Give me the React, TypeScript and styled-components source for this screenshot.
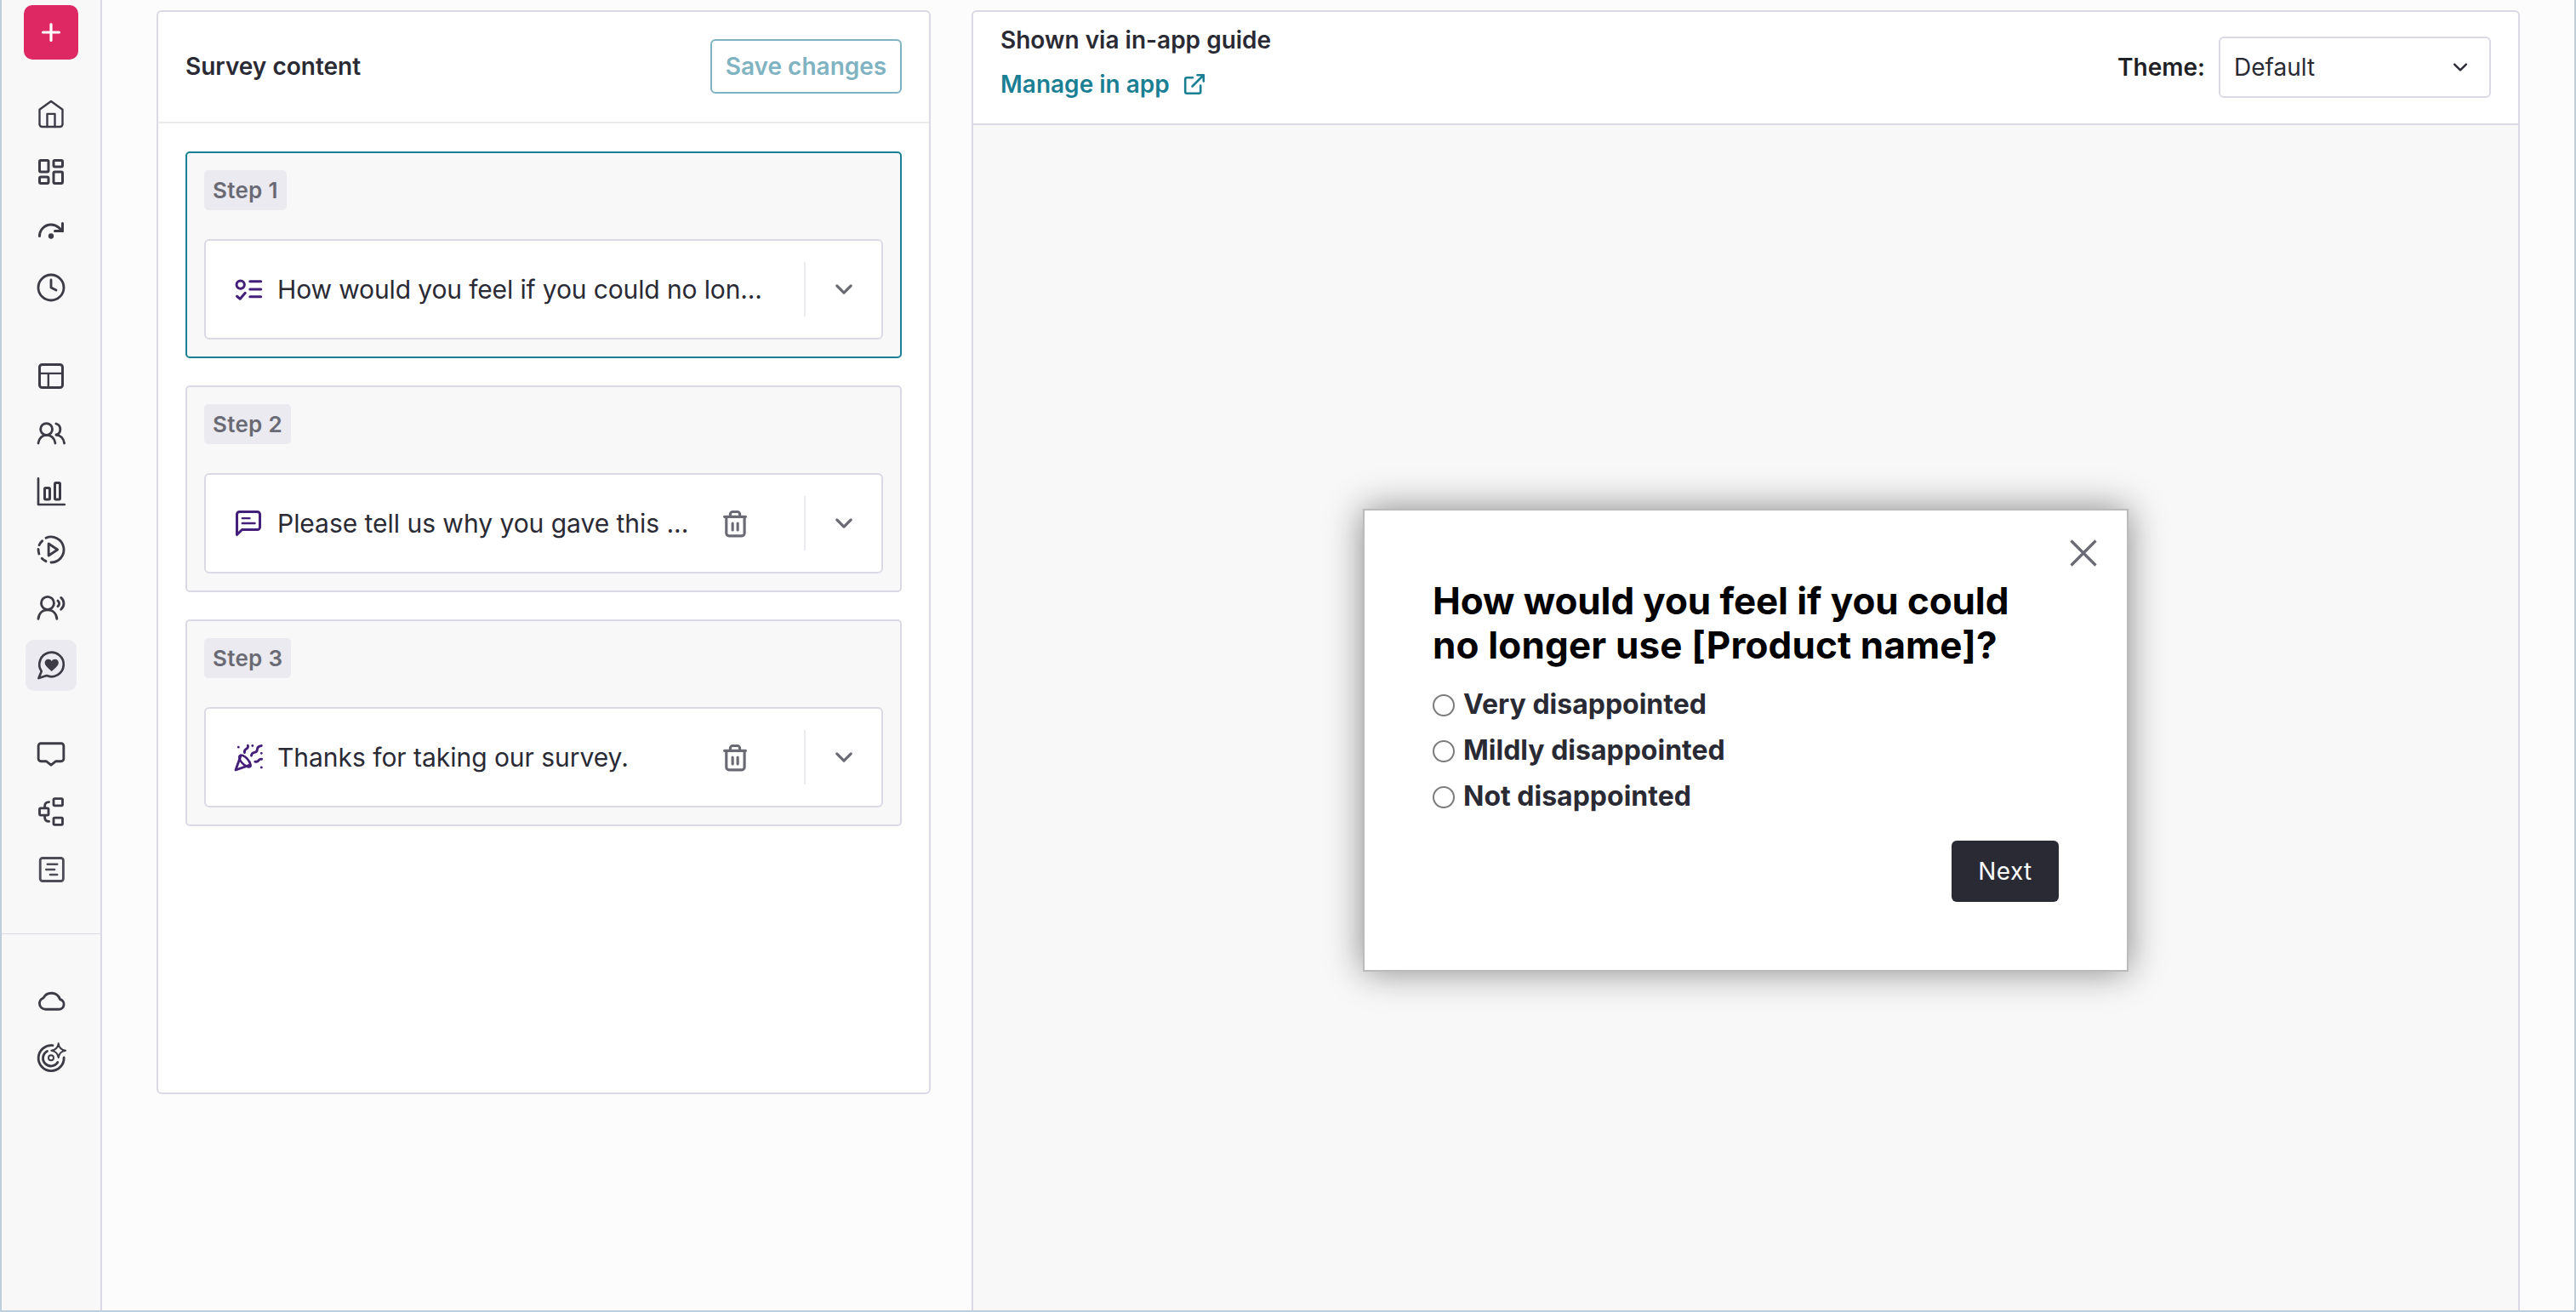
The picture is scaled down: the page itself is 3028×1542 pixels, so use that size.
import React from "react";
import styled, { createGlobalStyle, css } from "styled-components";

const color = {
  ink: "#2a2a35",
  icon: "#3c3b46",
  muted: "#6a6a75",
  line: "#dadae6",
  lineSoft: "#eaeaef",
  surface: "#f8f8f8",
  chip: "#eaeaf0",
  teal: "#1a7f93",
  tealMuted: "#7fb3c1",
  purple: "#441f79",
  pink: "#de2864",
};

const GlobalStyle = createGlobalStyle`
  * { box-sizing: border-box; }
  html, body { margin: 0; padding: 0; }
  body { font-family: Inter, "Liberation Sans", sans-serif; color: ${color.ink}; background: #fcfcfc; }
  button { font-family: inherit; }
`;

const Frame = styled.div`
  display: flex;
  width: 3028px;
  height: 1542px;
  overflow: hidden;
  background: #fcfcfc;
  border: 2px solid #bfcedb;
  border-top: 0;
`;

const Sidebar = styled.nav`
  flex: none;
  display: flex;
  flex-direction: column;
  align-items: center;
  width: 118px;
  padding-top: 6px;
  background: ${color.surface};
  border-right: 2px solid ${color.line};
`;

const AddButton = styled.button`
  display: flex;
  align-items: center;
  justify-content: center;
  width: 64px;
  height: 64px;
  padding: 0;
  margin-bottom: 34px;
  border: 0;
  border-radius: 10px;
  background: ${color.pink};
  color: #fff;
`;

const NavGroup = styled.div`
  display: flex;
  flex-direction: column;
  gap: 8px;
  margin-bottom: 44px;
`;

const NavItem = styled.a<{ $active?: boolean }>`
  display: flex;
  align-items: center;
  justify-content: center;
  width: 60px;
  height: 60px;
  border-radius: 10px;
  color: ${color.icon};
  background: ${(p) => (p.$active ? color.chip : "transparent")};
`;

const NavDivider = styled.hr`
  width: 100%;
  height: 1px;
  margin: 1px 0 48px;
  border: 0;
  background: ${color.line};
`;

const Svg = styled.svg<{ $size?: number; $stroke?: number }>`
  flex: none;
  display: block;
  width: ${(p) => p.$size ?? 36}px;
  height: ${(p) => p.$size ?? 36}px;
  fill: none;
  stroke: currentColor;
  stroke-width: ${(p) => p.$stroke ?? 2};
  stroke-linecap: round;
  stroke-linejoin: round;
  overflow: visible;
`;

const Workspace = styled.main`
  flex: 1;
  display: flex;
  align-items: flex-start;
  gap: 48px;
  padding: 12px 64px 0 64px;
`;

const panel = css`
  border: 2px solid ${color.line};
  background: #fff;
`;

const SurveyPanel = styled.section`
  ${panel}
  flex: none;
  width: 910px;
  height: 1274px;
  border-radius: 6px;
`;

const SurveyHeader = styled.header`
  display: flex;
  align-items: center;
  justify-content: space-between;
  height: 131px;
  padding: 0 32px 1px;
  border-bottom: 2px solid ${color.lineSoft};
`;

const Heading = styled.h2`
  margin: 0;
  font-size: 28px;
  line-height: 40px;
  font-weight: 600;
`;

const SaveButton = styled.button`
  width: 225px;
  height: 64px;
  padding: 0;
  border: 2px solid ${color.tealMuted};
  border-radius: 6px;
  background: #fff;
  color: ${color.tealMuted};
  font-size: 28px;
  font-weight: 600;
  white-space: nowrap;
`;

const StepList = styled.div`
  display: flex;
  flex-direction: column;
  gap: 32px;
  padding: 33px 32px 0;
`;

const StepCard = styled.article<{ $selected?: boolean }>`
  display: flex;
  flex-direction: column;
  align-items: flex-start;
  justify-content: space-between;
  height: 243px;
  padding: 20px;
  border: 2px solid ${(p) => (p.$selected ? color.teal : color.line)};
  border-radius: 5px;
  background: ${color.surface};
`;

const StepBadge = styled.span`
  height: 47px;
  padding: 0 10px;
  border-radius: 5px;
  background: ${color.chip};
  color: ${color.muted};
  font-size: 26px;
  line-height: 47px;
  font-weight: 600;
  letter-spacing: 0.3px;
`;

const QuestionRow = styled.div`
  display: flex;
  align-items: center;
  width: 100%;
  height: 118px;
  padding-left: 32px;
  border: 2px solid ${color.line};
  border-radius: 6px;
  background: #fff;
`;

const QuestionIcon = styled.span`
  display: flex;
  color: ${color.purple};
`;

const QuestionText = styled.span<{ $tracking: number }>`
  flex: 1;
  min-width: 0;
  padding-left: 16px;
  font-size: 30px;
  line-height: 40px;
  letter-spacing: ${(p) => p.$tracking}px;
  white-space: nowrap;
`;

const RowAction = styled.button`
  display: flex;
  justify-content: center;
  width: 36px;
  margin-right: 63px;
  padding: 0;
  border: 0;
  background: none;
  color: ${color.muted};
`;

const ExpandButton = styled.button`
  display: flex;
  align-items: center;
  justify-content: center;
  width: 91px;
  height: 64px;
  padding: 0 0 0 1px;
  border: 0;
  border-left: 2px solid ${color.lineSoft};
  background: none;
  color: ${color.muted};
`;

const GuidePanel = styled.section`
  ${panel}
  flex: 1;
  display: flex;
  flex-direction: column;
  height: 1528px;
  border-bottom: 0;
  border-radius: 6px 6px 0 0;
`;

const GuideHeader = styled.header`
  flex: none;
  display: flex;
  align-items: center;
  justify-content: space-between;
  height: 133px;
  padding: 0 32px 1px;
  border-bottom: 2px solid ${color.line};
`;

const GuideInfo = styled.div`
  display: flex;
  flex-direction: column;
  gap: 12px;
  padding-bottom: 12px;
`;

const ManageLink = styled.a`
  display: flex;
  align-items: center;
  gap: 17px;
  color: ${color.teal};
  font-size: 28px;
  line-height: 40px;
  font-weight: 600;
`;

const ThemeField = styled.label`
  display: flex;
  align-items: center;
  gap: 16px;
  color: #1f1f26;
  font-size: 28px;
  font-weight: 600;
`;

const ThemeSelect = styled.div`
  display: flex;
  align-items: center;
  justify-content: space-between;
  width: 320px;
  height: 72px;
  padding: 0 19px 0 16px;
  border: 2px solid ${color.line};
  border-radius: 6px;
  background: #fff;
  color: ${color.ink};
  font-weight: 400;
`;

const Preview = styled.div`
  flex: 1;
  display: flex;
  align-items: center;
  justify-content: center;
  background: ${color.surface};
`;

const Dialog = styled.div`
  position: relative;
  display: flex;
  flex-direction: column;
  width: 900px;
  height: 544px;
  margin-top: 53px;
  padding: 80px;
  border: 2px solid #bbb;
  background: #fff;
  box-shadow: 0 0 40px #888;
`;

const CloseButton = styled.button`
  position: absolute;
  top: 32px;
  right: 33px;
  display: flex;
  padding: 0;
  border: 0;
  background: none;
  color: ${color.muted};
`;

const Question = styled.h3`
  margin: 0;
  color: #000;
  font-size: 44px;
  line-height: 52px;
  font-weight: 700;
  white-space: nowrap;
`;

const QuestionLine = styled.span<{ $tracking: number }>`
  display: block;
  letter-spacing: ${(p) => p.$tracking}px;
`;

const Options = styled.div`
  display: flex;
  flex-direction: column;
  padding-top: 18px;
`;

const Option = styled.label`
  display: flex;
  align-items: center;
  gap: 10px;
  height: 54px;
  padding-bottom: 4px;
  font-size: 32px;
  font-weight: 700;
`;

const Radio = styled.span`
  width: 26px;
  height: 26px;
  margin-top: 4px;
  border: 2px solid #7c7c7c;
  border-radius: 50%;
  background: #fff;
`;

const NextButton = styled.button`
  align-self: flex-end;
  width: 126px;
  height: 72px;
  margin-top: 24px;
  padding: 0;
  border: 0;
  border-radius: 6px;
  background: ${color.ink};
  color: #fff;
  font-size: 28px;
  letter-spacing: 0.4px;
`;

type IconProps = { size?: number; stroke?: number; children: React.ReactNode };
const Icon = ({ size, stroke, children }: IconProps) => (
  <Svg viewBox="0 0 24 24" $size={size} $stroke={stroke} aria-hidden>
    {children}
  </Svg>
);

const HomeIcon = () => (
  <Icon stroke={1.6}>
    <path d="M3 8.5 12 2l9 6.5V20a2 2 0 0 1-2 2H5a2 2 0 0 1-2-2z" />
    <path d="M9 22V11.9h6V22" />
  </Icon>
);
const DashboardIcon = () => (
  <Icon>
    <rect x="3" y="3" width="7" height="9" rx="1" />
    <rect x="14" y="3" width="7" height="5" rx="1" />
    <rect x="14" y="12" width="7" height="9" rx="1" />
    <rect x="3" y="16" width="7" height="5" rx="1" />
  </Icon>
);
const RedoIcon = () => (
  <Icon>
    <circle cx="12" cy="17" r="1.1" fill="currentColor" />
    <path d="M21 7v6h-6" />
    <path d="M3 17a9 9 0 0 1 9-9 9 9 0 0 1 6 2.3l3 2.7" />
  </Icon>
);
const ClockIcon = () => (
  <Icon stroke={1.9}>
    <circle cx="12" cy="12" r="10" />
    <path d="M12 6v6l4 2" />
  </Icon>
);
const LayoutIcon = () => (
  <Icon>
    <rect x="3" y="3" width="18" height="18" rx="2" />
    <path d="M3 9.9h18M9.9 21V9.9" strokeWidth="1.6" />
  </Icon>
);
const UsersIcon = () => (
  <Icon stroke={1.9}>
    <circle cx="8.4" cy="8.3" r="4.6" />
    <path d="M2 19.3c.4-3.7 3.1-6.4 6.6-6.4s6.3 2.7 6.7 6.4" />
    <path d="M16 4a4.6 4.6 0 0 1 .2 8.7" />
    <path d="M16 12.7c3.3.3 5.9 2.9 6.4 6.6" />
  </Icon>
);
const ChartIcon = () => (
  <Icon stroke={1.8}>
    <path d="M2 1.6V22h20.5" />
    <rect x="7" y="9" width="4" height="9" rx=".8" strokeWidth="2" />
    <rect x="15" y="5" width="4" height="13" rx=".8" strokeWidth="2" />
  </Icon>
);
const ReplayIcon = () => (
  <Icon stroke={1.9}>
    <path d="M8 2.85A10 10 0 1 1 12 22" />
    <path d="M5.200 5.100A10 10 0 0 0 2.700 8.400M2.050 11.600A10 10 0 0 0 2.600 15.300M4.800 18.900A10 10 0 0 0 8 21.100" />
    <path d="M10.100 7.300v9.400l7-4.700z" />
  </Icon>
);
const VoiceIcon = () => (
  <Icon stroke={1.9}>
    <circle cx="9.3" cy="8.6" r="5" />
    <path d="M2 20.900c.4-4.200 3.200-7 7.300-7s6.900 2.800 7.300 7" />
    <path d="M17.300 6.700c1.500 1.200 1.500 3.200 0 4.400M19.800 4.300c2.900 2.400 2.900 6.800 0 9.200" />
  </Icon>
);
const FeedbackIcon = () => (
  <Icon stroke={1.8}>
    <path d="M2.300 22 4.500 16.600A9.500 9.500 0 1 1 8.600 20z" />
    <path
      d="M12.500 16.600c-2.400-2-5.400-4.200-5.400-6.700 0-1.600 1.200-2.800 2.700-2.800 1.100 0 2.100.6 2.700 1.500.6-.9 1.600-1.500 2.700-1.500 1.500 0 2.700 1.200 2.700 2.800 0 2.500-3 4.700-5.400 6.700z"
      fill="currentColor"
      stroke="none"
    />
  </Icon>
);
const SpeechIcon = () => (
  <Icon stroke={1.9}>
    <path d="M4 3.800h16a1.900 1.900 0 0 1 1.900 1.900v10.200a1.900 1.900 0 0 1-1.900 1.900h-4.200L12 20.800l-3.800-3H4a1.900 1.900 0 0 1-1.900-1.900V5.700A1.900 1.900 0 0 1 4 3.800z" />
  </Icon>
);
const FlowIcon = () => (
  <Icon stroke={1.9}>
    <rect x="14" y="1.7" width="7" height="5.5" rx=".8" />
    <rect x="3" y="9.2" width="7" height="5.5" rx=".8" />
    <rect x="14" y="16.7" width="7" height="5.5" rx=".8" />
    <path d="M7.100 8.600V7.500c0-2 1.200-3.100 3.300-3.100M7.100 15.400v1.100c0 2 1.200 3.100 3.300 3.100" />
  </Icon>
);
const FormIcon = () => (
  <Icon stroke={1.9}>
    <g opacity=".9">
      <rect x="3.5" y="3" width="18.1" height="18" rx="1.8" />
      <path d="M9.200 7.800h7.600M8.200 12h6.500M11.300 16h5.500" strokeWidth="1.7" />
    </g>
  </Icon>
);
const CloudIcon = () => (
  <Icon stroke={1.9}>
    <path d="M7.200 18.800h11a3.950 3.950 0 0 0 .8-7.800A7.100 7.100 0 0 0 6 9.900a4.600 4.600 0 0 0 1.200 8.900z" />
  </Icon>
);
const TargetIcon = () => (
  <Icon stroke={1.9}>
    <path d="M13.300 1.800A10 10 0 1 0 22.100 11.300" />
    <path d="M9 6.300A6.200 6.200 0 1 0 17.200 15" />
    <circle cx="12" cy="11.5" r="2" strokeWidth="1.3" />
    <path
      d="M17.800.2c.4 3.400 2 5.100 5.600 5.600-3.600.5-5.200 2.200-5.600 5.600-.4-3.400-2-5.100-5.600-5.600 3.600-.5 5.200-2.200 5.600-5.600z"
      strokeWidth="1.3"
    />
  </Icon>
);

const PollIcon = () => (
  <Icon>
    <circle cx="5.8" cy="8.4" r="3.1" />
    <path d="M3 17.500l2.500 2 4-4.600M13.200 5.900h8.600M13.200 12h8.600M13.200 17.900h8.600" />
  </Icon>
);
const MessageIcon = () => (
  <Icon>
    <path d="M3 21V5a2 2 0 0 1 2-2h14a2 2 0 0 1 2 2v10a2 2 0 0 1-2 2H7z" />
    <path d="M7.200 8.100h5.800M7.200 12h9.800" strokeWidth="1.6" />
  </Icon>
);
const PartyIcon = () => (
  <Icon stroke={1.9}>
    <path d="M5.800 11.300 2 22l10.700-3.790" />
    <path
      d="M12.600 15.600c1.200 1.700 1.500 3 .9 3.600-1.100 1-4.100-.2-6.300-2.600-2.300-2.400-2.900-5-1.800-5.900 1-1 3.700.4 5.500 2.300l2.300 3"
      strokeWidth="1.7"
    />
    <path d="M9 8.400c-.3-1.500.2-2.300 1.500-3 1-.5 1.300-1.300 1.100-2.600M14.300 10.800c.2-1.700.9-2.400 2.400-2.500 1.600-.1 2.200-.9 2.200-2.400.1-1.500 1.100-2.600 3.300-2.900M17.200 15.400c1.300.4 2.100.1 2.900-1 .6-.8 1.300-1.100 2.300-.9" />
    <path d="M4.200 4.100h.01M15.200 3h.01M22.200 8.900h.01M22.200 20h.01" />
  </Icon>
);
const TrashIcon = () => (
  <Icon stroke={2.1}>
    <path d="M3.700 6.900h16.600M5.200 7v12.800A2.100 2.100 0 0 0 7.300 21.900h10A2.100 2.100 0 0 0 19.400 19.800V7M8.300 6.500V4.800a1.800 1.800 0 0 1 1.800-1.800h3.800a1.800 1.800 0 0 1 1.800 1.800v1.700M10.100 12v5.300M14.100 12v5.300" />
  </Icon>
);
const ChevronIcon = ({ stroke = 2.1, size = 36 }: { stroke?: number; size?: number }) => (
  <Icon stroke={stroke} size={size}>
    <path d="m6.500 9.300 5.500 5.400 5.500-5.400" />
  </Icon>
);
const ExternalIcon = () => (
  <Svg viewBox="0 0 24 24" $size={24} $stroke={2.6} aria-hidden>
    <path d="M10 4.300H3.200a2 2 0 0 0-2 2v14.500a2 2 0 0 0 2 2h14a2 2 0 0 0 2-2V13.500M15.500 1.200h7.300v7.300M22.500 1.500 9.500 14.500" />
  </Svg>
);

const navGroups = [
  [HomeIcon, DashboardIcon, RedoIcon, ClockIcon],
  [LayoutIcon, UsersIcon, ChartIcon, ReplayIcon, VoiceIcon, FeedbackIcon],
  [SpeechIcon, FlowIcon, FormIcon],
];

const steps = [
  {
    label: "Step 1",
    text: "How would you feel if you could no lon...",
    tracking: -0.13,
    Glyph: PollIcon,
    removable: false,
    selected: true,
  },
  {
    label: "Step 2",
    text: "Please tell us why you gave this ...",
    tracking: -0.03,
    Glyph: MessageIcon,
    removable: true,
    selected: false,
  },
  {
    label: "Step 3",
    text: "Thanks for taking our survey.",
    tracking: -0.03,
    Glyph: PartyIcon,
    removable: true,
    selected: false,
  },
];

const options = ["Very disappointed", "Mildly disappointed", "Not disappointed"];

export default function App() {
  return (
    <>
      <GlobalStyle />
      <Frame>
        <Sidebar>
          <AddButton aria-label="Create">
            <Svg viewBox="0 0 24 24" $size={24} $stroke={3.2}>
              <path d="M12 2.500v19M2.500 12h19" />
            </Svg>
          </AddButton>
          {navGroups.map((group, g) => (
            <NavGroup key={g}>
              {group.map((Glyph, i) => (
                <NavItem key={i} $active={Glyph === FeedbackIcon}>
                  <Glyph />
                </NavItem>
              ))}
            </NavGroup>
          ))}
          <NavDivider />
          <NavGroup>
            <NavItem>
              <CloudIcon />
            </NavItem>
            <NavItem>
              <TargetIcon />
            </NavItem>
          </NavGroup>
        </Sidebar>

        <Workspace>
          <SurveyPanel>
            <SurveyHeader>
              <Heading>Survey content</Heading>
              <SaveButton>Save changes</SaveButton>
            </SurveyHeader>
            <StepList>
              {steps.map(({ label, text, tracking, Glyph, removable, selected }) => (
                <StepCard key={label} $selected={selected}>
                  <StepBadge>{label}</StepBadge>
                  <QuestionRow>
                    <QuestionIcon>
                      <Glyph />
                    </QuestionIcon>
                    <QuestionText $tracking={tracking}>{text}</QuestionText>
                    {removable && (
                      <RowAction aria-label="Delete">
                        <TrashIcon />
                      </RowAction>
                    )}
                    <ExpandButton aria-label="Expand">
                      <ChevronIcon />
                    </ExpandButton>
                  </QuestionRow>
                </StepCard>
              ))}
            </StepList>
          </SurveyPanel>

          <GuidePanel>
            <GuideHeader>
              <GuideInfo>
                <Heading>Shown via in-app guide</Heading>
                <ManageLink>
                  Manage in app
                  <ExternalIcon />
                </ManageLink>
              </GuideInfo>
              <ThemeField>
                Theme:
                <ThemeSelect>
                  Default
                  <ChevronIcon stroke={1.9} size={30} />
                </ThemeSelect>
              </ThemeField>
            </GuideHeader>
            <Preview>
              <Dialog>
                <CloseButton aria-label="Close">
                  <Svg viewBox="0 0 36 36" $size={36} $stroke={3.2}>
                    <path d="M3.500 3.500l29 29M32.500 3.500l-29 29" strokeLinecap="butt" />
                  </Svg>
                </CloseButton>
                <Question>
                  <QuestionLine $tracking={-0.1}>How would you feel if you could</QuestionLine>
                  <QuestionLine $tracking={0.15}>no longer use [Product name]?</QuestionLine>
                </Question>
                <Options>
                  {options.map((option) => (
                    <Option key={option}>
                      <Radio />
                      {option}
                    </Option>
                  ))}
                </Options>
                <NextButton>Next</NextButton>
              </Dialog>
            </Preview>
          </GuidePanel>
        </Workspace>
      </Frame>
    </>
  );
}
